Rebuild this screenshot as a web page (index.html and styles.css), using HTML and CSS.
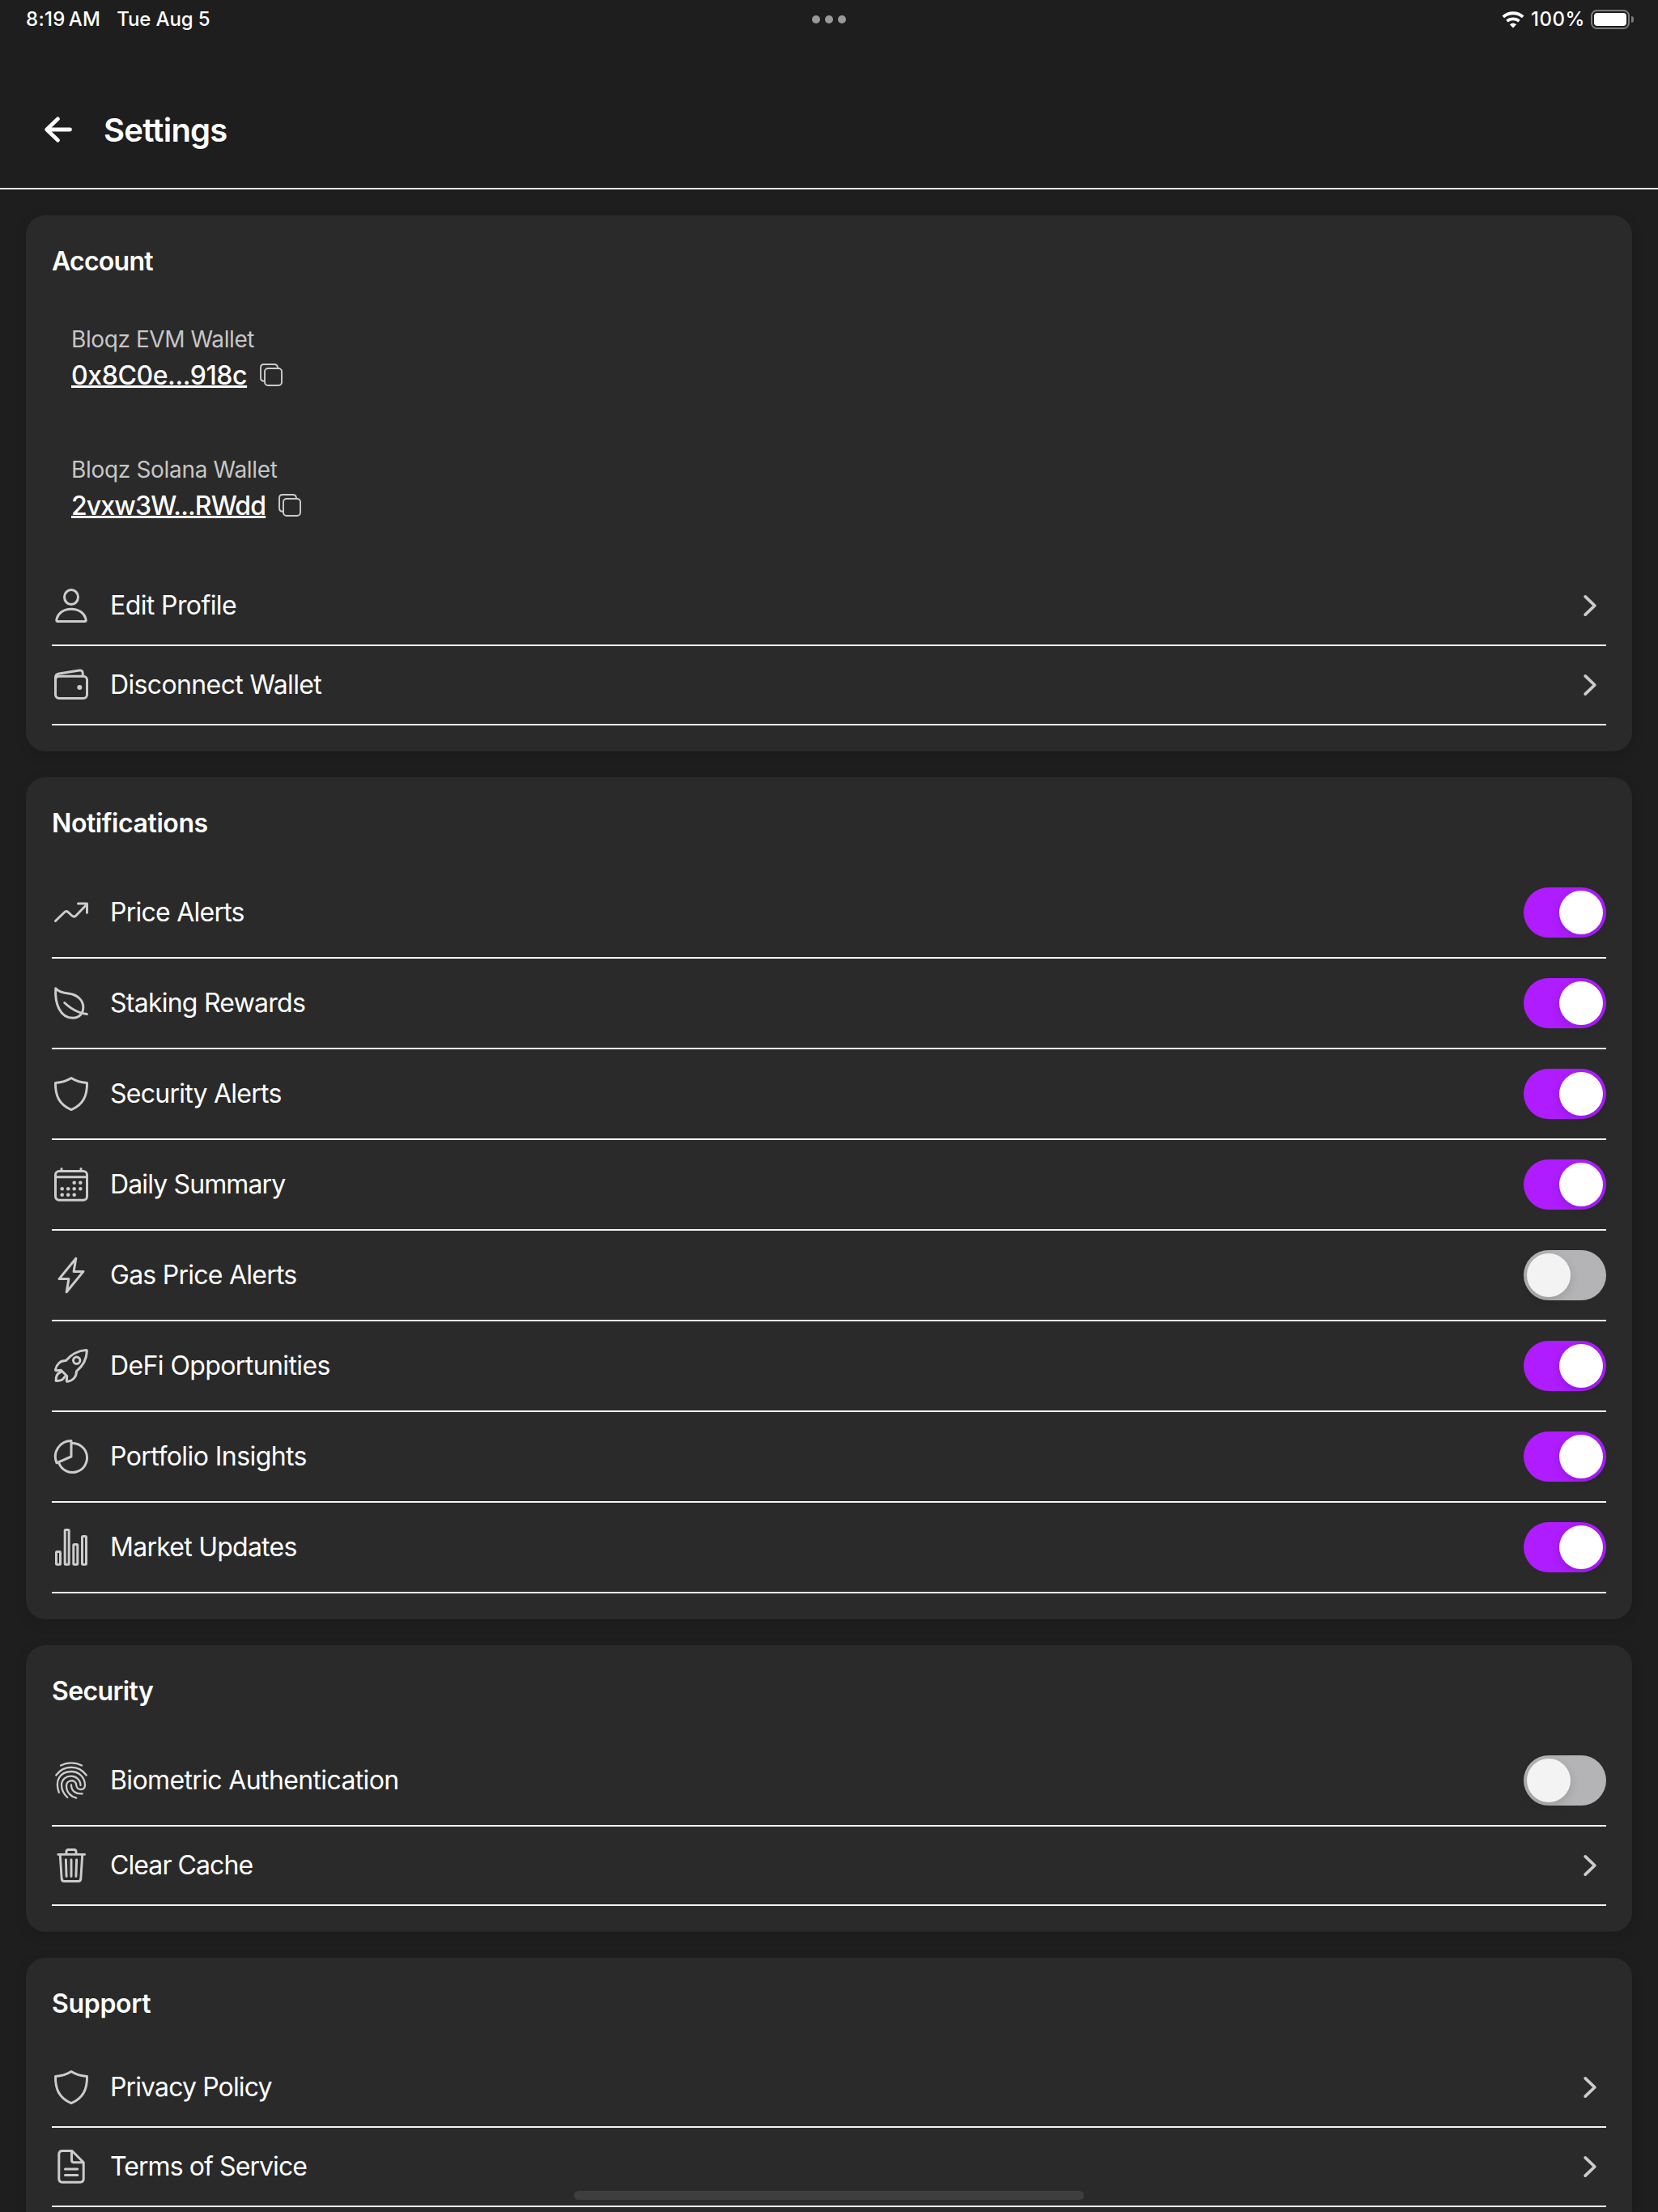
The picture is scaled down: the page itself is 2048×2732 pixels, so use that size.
FILE: index.html
```html
<!DOCTYPE html>
<html lang="en">
<head>
<meta charset="utf-8">
<title>Settings</title>
<link rel="stylesheet" href="styles.css">
</head>
<body>
<svg class="sprite" aria-hidden="true">
  <symbol id="chevron" viewBox="0 0 40 48"><path d="M14.2 12.9 25.8 24 14.2 35.1" stroke-width="3.8"/></symbol>
  <symbol id="copy" viewBox="0 0 28 28"><path d="M5.5 21.8C2.5 21.8 1 20.5 1 17.8V5Q1 1 5 1H17.8Q21.6 1 22 5"/><rect x="6" y="6" width="21" height="21" rx="4"/></symbol>
  <symbol id="person" viewBox="0 0 48 48"><ellipse cx="24" cy="13.5" rx="8.5" ry="9"/><path d="M5.8 42C7 33.2 15 28.2 24 28.2S41 33.2 42.2 42Q42.2 43.5 40.7 43.5H7.3Q5.8 43.5 5.8 42Z"/></symbol>
  <symbol id="wallet" viewBox="0 0 48 48"><rect x="4.5" y="13.2" width="39" height="27.3" rx="4.5"/><path d="M4.5 18V15C4.5 11.5 6 10.6 9 10.1L34 6C36.8 5.5 38.2 7 38.2 9.5V13"/><circle class="solid" cx="34.3" cy="27" r="3"/></symbol>
  <symbol id="trend" viewBox="0 0 48 48"><path d="M4.5 34.5 15.3 24Q18 21 20.7 24L24.6 27.8Q27.3 30.4 30 27.8L43.2 14"/><path d="M32.5 13H43.5V24.3"/></symbol>
  <symbol id="leaf" viewBox="0 0 48 48"><path d="M4.8 5.8C9 10.5 15 11.5 20 12 31 13 38.8 20 38.8 29 38.8 37 33.5 42.3 26 42.3 10 42.3 3.5 24 4.8 5.8Z"/><path d="M15.7 23.5Q23 30.5 32 34.5 38 37.2 43.5 37.5"/></symbol>
  <symbol id="shield" viewBox="0 0 48 48"><path d="M24 4.5C18 8.3 11 10 4.5 10.6 4.2 26 9 37 24 43.6 39 37 43.8 26 43.5 10.6 37 10 30 8.3 24 4.5Z"/></symbol>
  <symbol id="calendar" viewBox="0 0 48 48"><rect x="4.5" y="7.5" width="39" height="35.7" rx="4.5"/><path d="M4.5 14.7H43.5M12 4.5V7M36 4.5V7"/><g class="solid"><circle cx="27.7" cy="21.7" r="2.3"/><circle cx="35.3" cy="21.7" r="2.3"/><circle cx="12.7" cy="29.2" r="2.3"/><circle cx="20.2" cy="29.2" r="2.3"/><circle cx="27.7" cy="29.2" r="2.3"/><circle cx="35.3" cy="29.2" r="2.3"/><circle cx="12.7" cy="36.7" r="2.3"/><circle cx="20.2" cy="36.7" r="2.3"/><circle cx="27.7" cy="36.7" r="2.3"/></g></symbol>
  <symbol id="bolt" viewBox="0 0 48 48"><path d="M29.8 3.2 9 28.6H20.9L18.2 44.8 39 19.4H27.1Z"/></symbol>
  <symbol id="rocket" viewBox="0 0 48 48"><path d="M43.4 5.6C43.6 4.8 43.1 4.4 42.4 4.4 32.5 5 23 10.5 17.3 17.6 10.5 17.3 5.8 22 4.5 28.5 4.4 29.4 4.8 29.8 5.6 29.7L11.5 29.3 18.7 36.6 18.3 42.2C18.3 43 18.8 43.5 19.6 43.3 26 42.2 30.6 37.5 30.5 30.6 37.8 24.5 43 15.5 43.4 5.6Z"/><circle cx="30.7" cy="17.3" r="4.2"/><path d="M9.5 32.5C6 34 5 37.5 5.1 42.4 10 42.6 13.6 41.6 15.2 38.4"/><path d="M9.5 32.5 12.5 31.5M15.2 38.4 16.5 36.5" stroke-width="2"/></symbol>
  <symbol id="pie" viewBox="0 0 48 48"><path d="M24 4.5A19.5 19.5 0 0 0 6 31.8L24 24Z"/><path d="M24.5 7.5A18 18 0 1 1 9 32.6"/></symbol>
  <symbol id="bars" viewBox="0 0 48 48"><rect x="5.5" y="29.5" width="5" height="15.7" rx="1"/><rect x="16.2" y="2.5" width="5" height="42.7" rx="1"/><rect x="26.8" y="20.6" width="5" height="24.6" rx="1"/><rect x="37.5" y="10.5" width="5" height="34.7" rx="1"/></symbol>
  <symbol id="finger" viewBox="0 0 48 48"><g stroke-width="2.3"><path d="M11 5.5C19 1.2 29 1.2 37 5.5"/><path d="M5.3 17.5C15 4.5 33 4.5 42.7 17.5"/><path d="M8.8 38.8C3.5 24 10 13 24 13 34 13 41 20.5 41 30 41 36.8 30.5 37 30.2 29.5 29.5 22.3 18 22.3 18 31 18 38.5 23.5 44 30.3 45.6"/><path d="M19.3 45C13 39 12 34 12 29.5 12.5 15 35 15 35.5 30"/><path d="M24 29.5C24 37 29.5 41 37.7 40.3"/></g></symbol>
  <symbol id="trash" viewBox="0 0 48 48"><path d="M7.8 10.4H40.6M18 10V7Q18 4.5 20.5 4.5H27.5Q30 4.5 30 7V10M10.3 11.5 12.2 40.5Q12.5 43.5 15.3 43.5H32.7Q35.5 43.5 35.8 40.5L37.7 11.5M17.4 17 18.1 37.5M24 17V37.5M30.6 17 29.9 37.5" stroke-width="2.9"/></symbol>
  <symbol id="document" viewBox="0 0 48 48"><path d="M25 4.5H13Q8.8 4.5 8.8 8.7V39Q8.8 43.2 13 43.2H35Q39.2 43.2 39.2 39V18.8ZM24.5 5V15.8Q24.5 18.8 27.5 18.8H38.5M16.5 27H31.8M16.5 34.4H31.8"/></symbol>
</svg>

<div class="statusbar">
  <div class="status-left"><span class="time">8:19 AM</span><span class="date">Tue Aug 5</span></div>
  <div class="dots"><i></i><i></i><i></i></div>
  <div class="status-right">
    <svg class="wifi" viewBox="0 0 28 21"><path d="M1.8 6.9A18.3 18.3 0 0 1 26.2 6.9" stroke-width="3.8"/><path d="M6.5 12.2A11.4 11.4 0 0 1 21.5 12.2" stroke-width="3.7"/><path class="wifi-dot" d="M14 20.4 9.9 16.2Q14 12.8 18.1 16.2Z"/></svg>
    <span class="percent">100%</span>
    <span class="battery"><i></i></span><span class="nub"></span>
  </div>
</div>

<header class="header">
  <svg class="back" viewBox="0 0 36 36"><path d="M17.5 4.8 3.7 18 17.5 31.2M4 18H32.5"/></svg>
  <h1>Settings</h1>
</header>

<main>
  <section class="card">
    <h2 class="ls-75">Account</h2>
    <div class="account">
      <div class="label ls-41">Bloqz EVM Wallet</div>
      <div class="address"><a class="ls-41">0x8C0e...918c</a><svg class="copy"><use href="#copy"/></svg></div>
    </div>
    <div class="account">
      <div class="label ls-32">Bloqz Solana Wallet</div>
      <div class="address"><a class="ls-87">2vxw3W...RWdd</a><svg class="copy"><use href="#copy"/></svg></div>
    </div>
    <div class="row"><svg class="icon"><use href="#person"/></svg><span class="ls-60">Edit Profile</span><svg class="chevron"><use href="#chevron"/></svg></div>
    <div class="row"><svg class="icon"><use href="#wallet"/></svg><span class="ls-63">Disconnect Wallet</span><svg class="chevron"><use href="#chevron"/></svg></div>
  </section>

  <section class="card">
    <h2 class="ls-41">Notifications</h2>
    <div class="row tall"><svg class="icon"><use href="#trend"/></svg><span class="ls-75">Price Alerts</span><div class="toggle on"></div></div>
    <div class="row tall"><svg class="icon"><use href="#leaf"/></svg><span class="ls-75">Staking Rewards</span><div class="toggle on"></div></div>
    <div class="row tall"><svg class="icon"><use href="#shield"/></svg><span class="ls-75">Security Alerts</span><div class="toggle on"></div></div>
    <div class="row tall"><svg class="icon"><use href="#calendar"/></svg><span class="ls-87">Daily Summary</span><div class="toggle on"></div></div>
    <div class="row tall"><svg class="icon"><use href="#bolt"/></svg><span class="ls-75">Gas Price Alerts</span><div class="toggle"></div></div>
    <div class="row tall"><svg class="icon"><use href="#rocket"/></svg><span class="ls-60">DeFi Opportunities</span><div class="toggle on"></div></div>
    <div class="row tall"><svg class="icon"><use href="#pie"/></svg><span class="ls-57">Portfolio Insights</span><div class="toggle on"></div></div>
    <div class="row tall"><svg class="icon"><use href="#bars"/></svg><span class="ls-75">Market Updates</span><div class="toggle on"></div></div>
  </section>

  <section class="card">
    <h2 class="ls-63">Security</h2>
    <div class="row tall"><svg class="icon"><use href="#finger"/></svg><span class="ls-63">Biometric Authentication</span><div class="toggle"></div></div>
    <div class="row"><svg class="icon"><use href="#trash"/></svg><span class="ls-92">Clear Cache</span><svg class="chevron"><use href="#chevron"/></svg></div>
  </section>

  <section class="card">
    <h2 class="ls-32">Support</h2>
    <div class="row"><svg class="icon"><use href="#shield"/></svg><span class="ls-87">Privacy Policy</span><svg class="chevron"><use href="#chevron"/></svg></div>
    <div class="row"><svg class="icon"><use href="#document"/></svg><span class="ls-92">Terms of Service</span><svg class="chevron"><use href="#chevron"/></svg></div>
  </section>
</main>
<div class="home-indicator"></div>
</body>
</html>
```
FILE: styles.css
```css
* { box-sizing: border-box; }

body {
  margin: 0;
  height: 2732px;
  overflow: hidden;
  position: relative;
  background: #1e1e1e;
  color: #fff;
  font-family: Inter, "Liberation Sans", sans-serif;
}

svg {
  flex: none;
  fill: none;
  stroke: currentColor;
  stroke-width: 3;
  stroke-linecap: round;
  stroke-linejoin: round;
}

.sprite { position: absolute; width: 0; height: 0; }
.solid { fill: #ccc; stroke: none; }

/* Status bar */
.statusbar {
  display: grid;
  grid-template-columns: 1fr auto 1fr;
  align-items: center;
  height: 48px;
  padding: 0 30px 0 32px;
  font-size: 24px;
  font-weight: 500;
  line-height: 30px;
}
.status-left { display: flex; gap: 20px; padding-bottom: 1px; }
.time { letter-spacing: 0.3px; word-spacing: -2.6px; }
.date { letter-spacing: -0.14px; }
.dots { display: flex; gap: 6px; margin-left: -2px; }
.dots i { width: 10px; height: 10px; border-radius: 50%; background: #999; }
.status-right { display: flex; align-items: center; justify-content: flex-end; }
.wifi { width: 28px; height: 21px; stroke-linecap: butt; }
.percent { margin: 0 7px 0 8px; padding-bottom: 1px; letter-spacing: 0.55px; }
.wifi-dot { fill: #fff; stroke: none; }
.battery {
  width: 48px;
  height: 24px;
  padding: 2px;
  border: 2px solid #7b7b7b;
  border-radius: 7.5px;
}
.battery i { display: block; height: 16px; border-radius: 4px; background: #fff; }
.nub { width: 3px; height: 8px; margin-left: 2px; border-radius: 0 4px 4px 0; background: #7b7b7b; }

/* Header */
.header {
  display: flex;
  align-items: center;
  gap: 38px;
  height: 186px;
  padding: 40px 54px 0;
  border-bottom: 2px solid #e4e4e4;
}
.back { width: 36px; height: 36px; stroke-width: 4.8; }
h1 { margin: 0; padding-top: 1px; font-size: 40px; font-weight: 600; line-height: 48px; letter-spacing: -0.75px; }

/* Cards */
main {
  display: flex;
  flex-direction: column;
  gap: 32px;
  height: 2498px;
  padding: 32px 32px 0;
  overflow: hidden;
}
.card {
  flex: none;
  padding: 32px;
  border-radius: 24px;
  background: #2a2a2a;
  box-shadow: 0 4px 16px rgba(0, 0, 0, 0.12);
}
.card:last-child { flex: 1; padding-bottom: 0; border-radius: 24px 24px 0 0; }
h2 { margin: 0 0 30px; font-size: 32px; font-weight: 600; line-height: 50px; }

.account { height: 161px; padding: 24px 24px 0; }
.label { margin-bottom: 8px; color: #c6c6c6; font-size: 28px; line-height: 34px; }
.address { display: flex; align-items: center; gap: 16px; height: 40px; font-size: 32px; font-weight: 500; line-height: 39px; }
.address a {
  padding-bottom: 1px;
  text-decoration: underline;
  text-decoration-thickness: 3px;
  text-underline-offset: 1px;
  text-decoration-skip-ink: none;
}
.copy { width: 28px; height: 28px; margin-top: -2px; color: #ccc; stroke-width: 1.9; }

.row {
  display: flex;
  align-items: center;
  height: 98px;
  border-bottom: 2px solid #f4f4f4;
  font-size: 32px;
  line-height: 38px;
}
.row.tall { height: 112px; }
.row span { flex: 1; margin-left: 24px; padding-bottom: 1px; }
.icon { width: 48px; height: 48px; color: #ccc; }
.chevron { width: 40px; height: 48px; color: #ccc; }

.toggle {
  width: 102px;
  height: 62px;
  padding: 4px;
  border-radius: 31px;
  background: #b4b4b6;
}
.toggle::before {
  content: "";
  display: block;
  width: 54px;
  height: 54px;
  border-radius: 50%;
  background: #f3f3f3;
  box-shadow: 0 4px 12px rgba(0, 0, 0, 0.14);
}
.toggle.on { background: #ae1cff; }
.toggle.on::before { margin-left: 40px; background: #fff; }

/* Tracking per label */
.ls-32 { letter-spacing: -0.32px; }
.ls-41 { letter-spacing: -0.41px; }
.ls-57 { letter-spacing: -0.57px; }
.ls-60 { letter-spacing: -0.6px; }
.ls-63 { letter-spacing: -0.63px; }
.ls-75 { letter-spacing: -0.75px; }
.ls-87 { letter-spacing: -0.87px; }
.ls-92 { letter-spacing: -0.92px; }

.home-indicator {
  position: absolute;
  left: 709px;
  bottom: 15px;
  width: 630px;
  height: 11px;
  border-radius: 6px;
  background: #3e3e3e;
}
```
